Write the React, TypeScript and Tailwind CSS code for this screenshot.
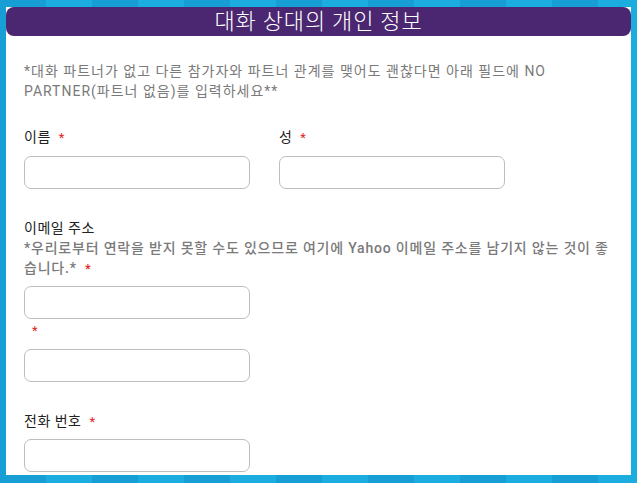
import React from 'react';

const font = { fontFamily: 'Roboto, "Noto Sans CJK KR", sans-serif' };

function Star({ className = '' }: { className?: string }) {
  return <span className={`text-[#e02424] text-[13px] ${className}`}>*</span>;
}

function Field({ className = '' }: { className?: string }) {
  return (
    <input
      type="text"
      className={`block w-[226px] h-[33px] rounded-[7px] border border-[#bdbdbd] bg-white ${className}`}
    />
  );
}

export default function App() {
  return (
    <div
      style={font}
      className="w-[637px] h-[483px] overflow-hidden pt-[7px] px-[6px] bg-[repeating-linear-gradient(90deg,#179fd5_0px,#179fd5_46px,#1bade0_46px,#1bade0_92px)]"
    >
      <div className="h-[468px] bg-white overflow-hidden">
        <div className="h-[29px] rounded-[8px] bg-[#4b2771] flex items-center justify-center">
          <h1 className="text-white text-[22px] font-light leading-none tracking-[0.8px]">
            대화 상대의 개인 정보
          </h1>
        </div>

        <div className="pl-[18px] pr-[10px]">
          <p className="mt-[25px] text-[14px] leading-[20px] text-[#7a7a7a] tracking-[1px] pr-[40px]">
            *대화 파트너가 없고 다른 참가자와 파트너 관계를 맺어도 괜찮다면 아래 필드에 NO PARTNER(파트너 없음)를 입력하세요**
          </p>

          <div className="mt-[26px] flex gap-[29px]">
            <div>
              <label className="block text-[14px] leading-[20px] font-normal tracking-[0.5px] text-[#222]">
                이름 <Star className="ml-[4px]" />
              </label>
              <Field className="mt-[8px]" />
            </div>
            <div>
              <label className="block text-[14px] leading-[20px] font-normal tracking-[0.5px] text-[#222]">
                성 <Star className="ml-[4px]" />
              </label>
              <Field className="mt-[8px]" />
            </div>
          </div>

          <div className="mt-[29px]">
            <label className="block text-[14px] leading-[20px] font-normal tracking-[0.5px] text-[#222]">
              이메일 주소
            </label>
            <p className="text-[14px] leading-[20px] font-medium tracking-[0.8px] text-[#7a7a7a]">
              *우리로부터 연락을 받지 못할 수도 있으므로 여기에 Yahoo 이메일 주소를 남기지 않는 것이 좋습니다.* <Star className="ml-[4px]" />
            </p>
            <Field className="mt-[7px]" />
            <div className="h-[20px] leading-[20px] mt-[1px] pl-[8px]">
              <Star />
            </div>
            <Field className="mt-[9px]" />
          </div>

          <div className="mt-[29px]">
            <label className="block text-[14px] leading-[20px] font-normal tracking-[0.5px] text-[#222]">
              전화 번호 <Star className="ml-[4px]" />
            </label>
            <Field className="mt-[7px]" />
          </div>
        </div>
      </div>
    </div>
  );
}
